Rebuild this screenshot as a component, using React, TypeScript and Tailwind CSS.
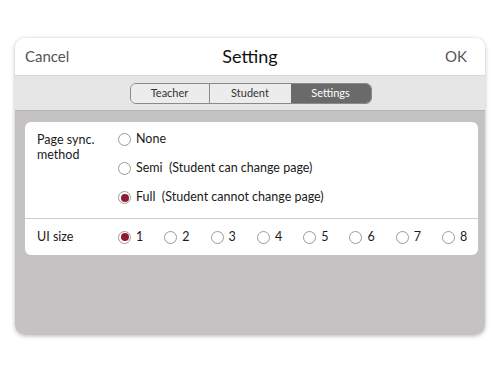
import React from "react";

function Radio({ checked }: { checked?: boolean }) {
  return (
    <span className="w-[13px] h-[13px] rounded-full border border-[#9a9a9a] bg-white flex items-center justify-center shrink-0">
      {checked && <span className="w-[8px] h-[8px] rounded-full bg-[#8e1b36]" />}
    </span>
  );
}

export default function App() {
  const font = { fontFamily: "Lato, 'Noto Sans', sans-serif" };
  return (
    <div className="w-[500px] h-[375px] bg-white pt-[38px] px-[15px]" style={font}>
      <div className="w-[470px] h-[297px] rounded-[10px] overflow-hidden flex flex-col shadow-[0_1px_4px_rgba(0,0,0,0.28)]">
        <div className="h-[38px] bg-white flex items-center justify-between px-[10px] border-b border-[#d6d6d6] relative">
          <span className="text-[15px] text-[#555]">Cancel</span>
          <span className="absolute left-0 right-0 text-center text-[18px] text-[#111] pointer-events-none">Setting</span>
          <span className="text-[15px] text-[#555] pr-[8px]">OK</span>
        </div>
        <div className="h-[35px] bg-[#e6e6e6] flex items-center justify-center border-b border-[#b5b5b5]">
          <div className="flex h-[21px] rounded-[6px] border border-[#8a8a8a] overflow-hidden text-[11px] ml-[1px]">
            <div className="w-[79px] flex items-center justify-center bg-[#ececec] text-[#333] border-r border-[#8a8a8a]">Teacher</div>
            <div className="w-[81px] flex items-center justify-center bg-[#ececec] text-[#333]">Student</div>
            <div className="w-[80px] flex items-center justify-center bg-[#6a6a6a] text-white">Settings</div>
          </div>
        </div>
        <div className="flex-1 bg-[#c4c2c3] px-[10px] pt-[11px]">
          <div className="bg-white rounded-[6px] w-[453px] text-[12.5px] text-[#1a1a1a]">
            <div className="flex items-start pt-[3px] pb-[6px] border-b border-[#cfcfcf]">
              <div className="w-[93px] shrink-0 pl-[12px] mt-[7px] leading-[15px]">Page sync.<br />method</div>
              <div className="flex flex-col">
                <div className="h-[29px] flex items-center gap-[5px]"><Radio /><span>None</span></div>
                <div className="h-[29px] flex items-center gap-[5px]"><Radio /><span className="whitespace-pre">Semi  (Student can change page)</span></div>
                <div className="h-[29px] flex items-center gap-[5px]"><Radio checked /><span className="whitespace-pre">Full  (Student cannot change page)</span></div>
              </div>
            </div>
            <div className="flex items-center h-[36px]">
              <div className="w-[93px] shrink-0 pl-[12px]">UI size</div>
              <div className="flex">
                {[1, 2, 3, 4, 5, 6, 7, 8].map((n) => (
                  <div key={n} className="w-[46.3px] shrink-0 flex items-center gap-[5px]">
                    <Radio checked={n === 1} />
                    <span>{n}</span>
                  </div>
                ))}
              </div>
            </div>
          </div>
        </div>
      </div>
    </div>
  );
}
